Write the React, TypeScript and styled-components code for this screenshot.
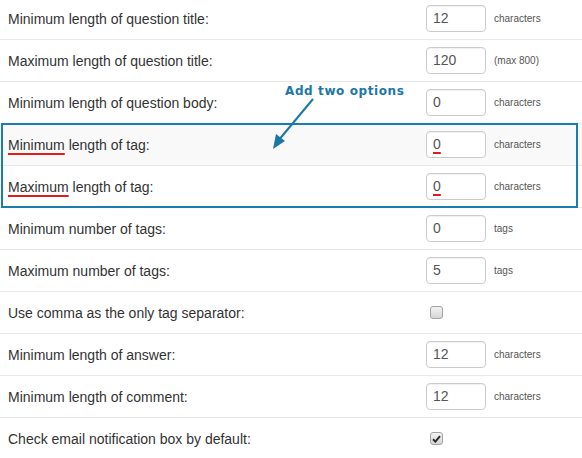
import styled, { createGlobalStyle } from "styled-components";

const GlobalStyle = createGlobalStyle`
  html, body {
    margin: 0;
    padding: 0;
    background: #fff;
    overflow: hidden;
  }
  body {
    font-family: "Liberation Sans", Arial, sans-serif;
    font-size: 14px;
    color: #333;
  }
`;

const StSettings = styled.div`
  position: relative;
  width: 582px;
  margin-top: -3px;
`;

const StGroup = styled.div`
  position: relative;

  &::after {
    content: "";
    position: absolute;
    top: 0;
    bottom: -1px;
    left: 1px;
    right: 4px;
    border: 2px solid #1c7cab;
    pointer-events: none;
  }
`;

const StRow = styled.div<{ $shaded?: boolean }>`
  display: flex;
  align-items: center;
  height: 41px;
  border-top: 1px solid #e8e8e8;
  background: ${({ $shaded }) => ($shaded ? "#f9f9f9" : "#fff")};
`;

const StLabel = styled.div`
  flex: 0 0 418px;
  padding-left: 8px;
  line-height: 20px;
`;

const StMark = styled.span`
  text-decoration: underline;
  text-decoration-color: #e41b1b;
  text-decoration-thickness: 2px;
  text-underline-offset: 3px;
`;

const StField = styled.div`
  box-sizing: border-box;
  width: 60px;
  height: 27px;
  padding: 0 6px;
  border: 1px solid #ccc;
  border-radius: 4px;
  background: #fff;
  box-shadow: inset 0 1px 1px rgba(0, 0, 0, 0.06);
  color: #555;
  font-size: 14px;
  line-height: 25px;
`;

const StUnit = styled.span`
  margin-left: 8px;
  font-size: 10px;
  color: #555;
`;

const StCheck = styled.span<{ $checked?: boolean }>`
  display: inline-flex;
  align-items: center;
  justify-content: center;
  box-sizing: border-box;
  width: 13px;
  height: 13px;
  margin-left: 4px;
  border: 1px solid #a3a3a3;
  border-radius: 3px;
  background: linear-gradient(#f2f2f2, #d6d6d6);
`;

const StNote = styled.div`
  position: absolute;
  left: 285px;
  top: 87px;
  font-family: "DejaVu Sans", Verdana, sans-serif;
  font-weight: bold;
  font-size: 12px;
  letter-spacing: 0.6px;
  color: #1b77a8;
  white-space: nowrap;
`;

const StArrow = styled.svg`
  position: absolute;
  left: 268px;
  top: 100px;
`;

interface IRow {
  mark?: string;
  label: string;
  value?: string;
  unit?: string;
  check?: boolean;
  markValue?: boolean;
}

const before: IRow[] = [
  { label: "Minimum length of question title:", value: "12", unit: "characters" },
  { label: "Maximum length of question title:", value: "120", unit: "(max 800)" },
  { label: "Minimum length of question body:", value: "0", unit: "characters" },
];

const added: IRow[] = [
  { mark: "Minimum", label: " length of tag:", value: "0", unit: "characters", markValue: true },
  { mark: "Maximum", label: " length of tag:", value: "0", unit: "characters", markValue: true },
];

const after: IRow[] = [
  { label: "Minimum number of tags:", value: "0", unit: "tags" },
  { label: "Maximum number of tags:", value: "5", unit: "tags" },
  { label: "Use comma as the only tag separator:", check: false },
  { label: "Minimum length of answer:", value: "12", unit: "characters" },
  { label: "Minimum length of comment:", value: "12", unit: "characters" },
  { label: "Check email notification box by default:", check: true },
];

const SettingRow = ({ row, shaded }: { row: IRow; shaded?: boolean }) => (
  <StRow $shaded={shaded}>
    <StLabel>
      {row.mark && <StMark>{row.mark}</StMark>}
      {row.label}
    </StLabel>
    {row.check !== undefined ? (
      <StCheck $checked={row.check}>
        {row.check && (
          <svg width="9" height="8" viewBox="0 0 9 8">
            <path d="M1 4.2 L3.4 6.6 L8 1.2" fill="none" stroke="#2b2b2b" strokeWidth="2" />
          </svg>
        )}
      </StCheck>
    ) : (
      <>
        <StField>{row.markValue ? <StMark>{row.value}</StMark> : row.value}</StField>
        <StUnit>{row.unit}</StUnit>
      </>
    )}
  </StRow>
);

const App = () => {
  return (
    <>
      <GlobalStyle />
      <StSettings>
        {before.map((row) => (
          <SettingRow key={row.label} row={row} />
        ))}
        <StGroup>
          {added.map((row, i) => (
            <SettingRow key={row.mark} row={row} shaded={i === 0} />
          ))}
        </StGroup>
        {after.map((row) => (
          <SettingRow key={row.label} row={row} />
        ))}
        <StNote>Add two options</StNote>
        <StArrow width="50" height="56" viewBox="0 0 50 56">
          <line x1="45" y1="2" x2="10" y2="44" stroke="#1b77a8" strokeWidth="2" />
          <polygon points="5,52 8,37 17,44" fill="#1b77a8" />
        </StArrow>
      </StSettings>
    </>
  );
};

export default App;
